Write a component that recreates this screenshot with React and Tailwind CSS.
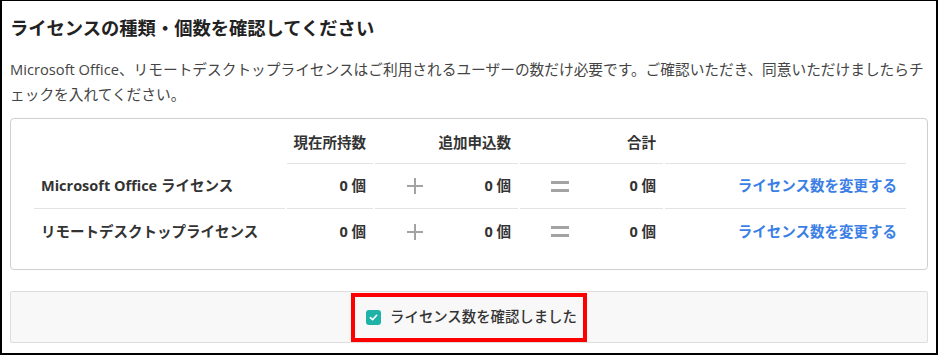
import React from 'react';

const font = { fontFamily: '"Open Sans", "Noto Sans CJK JP", sans-serif' };

const Plus = () => (
  <svg width="16" height="16" viewBox="0 0 16 16" className="shrink-0">
    <rect x="0" y="7" width="16" height="2" fill="#a3a3a3" />
    <rect x="7" y="0" width="2" height="16" fill="#a3a3a3" />
  </svg>
);

const Equals = () => (
  <svg width="18" height="11" viewBox="0 0 18 11" className="shrink-0">
    <rect x="0" y="0" width="18" height="3" fill="#a3a3a3" />
    <rect x="0" y="8" width="18" height="3" fill="#a3a3a3" />
  </svg>
);

const rows = [
  { name: 'Microsoft Office ライセンス', current: 0, add: 0, total: 0 },
  { name: 'リモートデスクトップライセンス', current: 0, add: 0, total: 0 },
];

const App = () => {
  return (
    <div
      className="w-[938px] h-[355px] bg-white border-t border-l-2 border-r-2 border-b-2 border-black px-[8px] text-[#333]"
      style={font}
    >
      {/* Title */}
      <h1 className="pt-[13px] text-[18.3px] leading-[28px] font-bold text-[#222]">
        ライセンスの種類・個数を確認してください
      </h1>

      {/* Description */}
      <p className="mt-[15px] text-[14.7px] leading-[25px] text-[#444]">
        Microsoft Office、リモートデスクトップライセンスはご利用されるユーザーの数だけ必要です。ご確認いただき、同意いただけましたらチェックを入れてください。
      </p>

      {/* License table */}
      <div className="mt-[11px] border border-[#cfcfcf] rounded-[4px] pl-[23px] pr-[21px] pt-[4px] pb-[15px]">
        <div className="grid grid-cols-[251px_86px_143px_143px_1fr] gap-x-[2px] text-[14.5px]">
          {/* header */}
          <div className="h-[41px]" />
          <div className="h-[41px] border-b border-[#e3e3e3] flex items-center justify-end pr-[7px] font-semibold text-[#333]">現在所持数</div>
          <div className="h-[41px] border-b border-[#e3e3e3] flex items-center justify-end pr-[7px] font-semibold text-[#333]">追加申込数</div>
          <div className="h-[41px] border-b border-[#e3e3e3] flex items-center justify-end pr-[7px] font-semibold text-[#333]">合計</div>
          <div className="h-[41px] border-b border-[#e3e3e3]" />

          {rows.map((r, i) => {
            const line = i === 0 ? 'h-[45px] border-b border-[#e3e3e3]' : 'h-[45px]';
            return (
              <React.Fragment key={r.name}>
                <div className={`${line} flex items-center pl-[7px] font-bold text-[#333]`}>{r.name}</div>
                <div className={`${line} flex items-center justify-end pr-[7px] font-bold text-[#333]`}>{r.current} 個</div>
                <div className={`${line} flex items-center justify-between pl-[32px] pr-[7px] font-bold text-[#333]`}>
                  <Plus />
                  <span>{r.add} 個</span>
                </div>
                <div className={`${line} flex items-center justify-between pl-[31px] pr-[7px] font-bold text-[#333]`}>
                  <Equals />
                  <span>{r.total} 個</span>
                </div>
                <div className={`${line} flex items-center justify-end pr-[9px]`}>
                  <a href="#" className="font-bold text-[#3b7fe6]">ライセンス数を変更する</a>
                </div>
              </React.Fragment>
            );
          })}
        </div>
      </div>

      {/* Confirmation */}
      <div className="mt-[21px] h-[52px] bg-[#f8f8f8] border border-[#dedede] rounded-[2px] flex items-center justify-center">
        <label className="h-[49px] border-4 border-[#ff0000] flex items-center gap-[9px] pl-[11px] pr-[6px] cursor-pointer">
          <span className="w-[15px] h-[15px] rounded-[3px] bg-[#1fb3a8] flex items-center justify-center">
            <svg width="9" height="9" viewBox="0 0 10 10">
              <path d="M1.5 5.2 L4 7.5 L8.5 2.5" stroke="#fff" strokeWidth="1.8" fill="none" strokeLinecap="round" strokeLinejoin="round" />
            </svg>
          </span>
          <span className="text-[14.4px] font-medium text-[#333]">ライセンス数を確認しました</span>
        </label>
      </div>
    </div>
  );
};

export default App;
